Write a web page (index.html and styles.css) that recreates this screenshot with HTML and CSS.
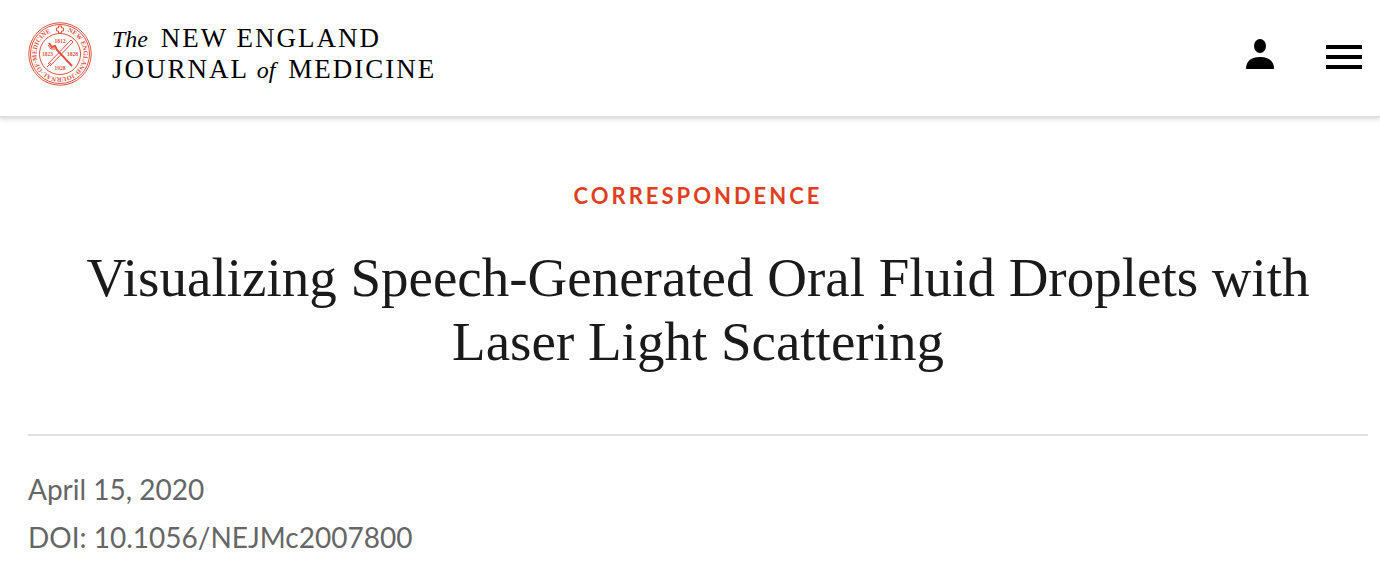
FILE: index.html
```html
<!DOCTYPE html>
<html lang="en">
<head>
    <meta charset="UTF-8">
    <meta name="viewport" content="width=device-width, initial-scale=1.0">
    <title>Visualizing Speech-Generated Oral Fluid Droplets</title>
    <link rel="stylesheet" href="styles.css">
</head>
<body>
    <header>
        <a class="logo" href="#">
            <svg class="seal" viewBox="0 0 128 128" aria-hidden="true">
                <defs>
                    <path id="ring" d="M64 17a47 47 0 1 1 0 94a47 47 0 1 1 0-94"/>
                </defs>
                <g class="seal-lines">
                    <circle cx="64" cy="64" r="62.5"/>
                    <circle cx="64" cy="64" r="59"/>
                    <circle cx="64" cy="64" r="41"/>
                    <path d="M61 8h6v4h4v6h-4v4h-6v-4h-4v-6h4z"/>
                    <path class="thick" d="M42 42l6 8 6-2 4 8 30 32"/>
                    <path d="M40 46l6 8 8 0M40 84l46-48M44 88l46-48M86 36l4 4M38 90l8-8"/>
                </g>
                <text class="seal-name"><textPath href="#ring" startOffset="15">NEW ENGLAND·JOURNAL·OF·MEDICINE</textPath></text>
                <g class="seal-year">
                    <text x="64" y="41">1812</text>
                    <text x="39" y="68">1823</text>
                    <text x="89" y="68">1828</text>
                    <text x="64" y="95">1928</text>
                </g>
            </svg>
            <span class="wordmark">
                <span><i>The</i> NEW ENGLAND</span>
                <span>JOURNAL <i>of</i> MEDICINE</span>
            </span>
        </a>
        <div class="menu">
            <button aria-label="Account">
                <svg width="28" height="30" viewBox="0 0 28 30">
                    <ellipse cx="14" cy="7" rx="6" ry="7"/>
                    <path d="M0 30C0 22 5 18 14 18s14 4 14 12z"/>
                </svg>
            </button>
            <button aria-label="Menu">
                <svg width="36" height="24" viewBox="0 0 36 24">
                    <path d="M0 0h36v4H0zM0 10h36v4H0zM0 20h36v4H0z"/>
                </svg>
            </button>
        </div>
    </header>
    <main>
        <p class="category">CORRESPONDENCE</p>
        <h1>Visualizing Speech-Generated Oral Fluid Droplets with Laser Light Scattering</h1>
        <div class="meta">
            <div>April 15, 2020</div>
            <div>DOI: 10.1056/NEJMc2007800</div>
        </div>
    </main>
</body>
</html>
```
FILE: styles.css
```css
body {
    font-family: Lato, sans-serif;
    background: #fff;
    color: #1a1a1a;
    margin: 0;
}
header {
    display: flex;
    justify-content: space-between;
    align-items: center;
    padding: 22px 18px 30px 28px;
    border-bottom: 2px solid #e0e0e0;
    box-shadow: 0 2px 4px rgba(0, 0, 0, 0.12);
}
.logo {
    display: flex;
    align-items: center;
    gap: 20px;
    color: #000;
    text-decoration: none;
}
.seal {
    width: 64px;
    height: 64px;
}
.seal-lines {
    fill: none;
    stroke: #e0523f;
    stroke-width: 2;
}
.seal-lines .thick {
    stroke-width: 4;
}
.seal text {
    font-family: "Liberation Serif", serif;
    font-weight: 700;
    fill: #e0523f;
}
.seal .seal-name {
    font-size: 13px;
}
.seal .seal-year text {
    font-size: 11px;
    text-anchor: middle;
}
.wordmark {
    display: flex;
    flex-direction: column;
    font-family: "Liberation Serif", serif;
    font-size: 27px;
    line-height: 30px;
    letter-spacing: 2px;
    white-space: nowrap;
}
.wordmark i {
    font-size: 24px;
    letter-spacing: 0;
    margin-right: 4px;
}
.menu {
    display: flex;
    align-items: flex-end;
    gap: 52px;
}
.menu button {
    padding: 0;
    background: none;
    border: none;
    cursor: pointer;
}
.menu svg {
    display: block;
}
main {
    padding: 62px 12px 0 28px;
}
.category {
    margin: 0;
    color: #e23e22;
    font-size: 22px;
    font-weight: 700;
    line-height: 32px;
    letter-spacing: 3px;
    text-align: center;
}
h1 {
    margin: 34px 0 60px;
    padding: 0 40px;
    font-family: "Liberation Serif", serif;
    font-size: 55px;
    font-weight: 400;
    line-height: 64px;
    text-align: center;
}
.meta {
    padding-top: 29px;
    border-top: 2px solid #e0e0e0;
    color: #666;
    font-size: 28px;
    line-height: 48px;
}
```
